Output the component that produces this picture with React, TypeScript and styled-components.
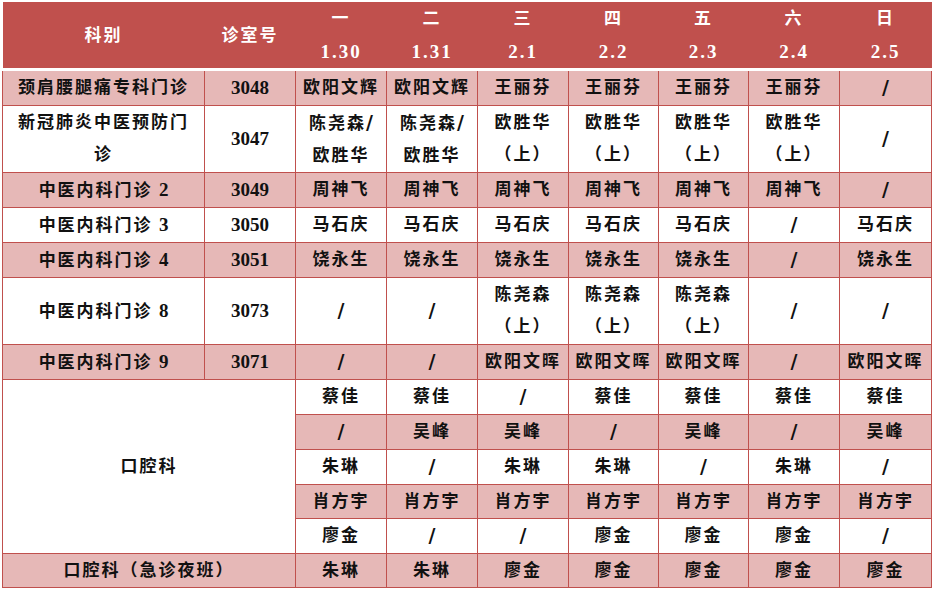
import React from "react";
import styled, { createGlobalStyle } from "styled-components";

const RED = "#c0504d";
const PINK = "#e6b8b7";

const Global = createGlobalStyle`
  html, body { margin: 0; padding: 0; background: #fff; }
  body { padding: 2px; }
`;

const Table = styled.table`
  border-collapse: collapse;
  table-layout: fixed;
  width: 929px;
  font-family: "Liberation Serif", "Noto Sans CJK SC", serif;
  font-size: 17px;
  font-weight: 700;
  letter-spacing: 2px;
  color: #111;
`;

const HeadRow = styled.tr`
  height: 33px;
`;

const HeadCell = styled.th<{ $bottom?: boolean; $num?: boolean }>`
  background: ${RED};
  color: #fff;
  font-weight: 700;
  font-size: ${(p) => (p.$num ? "19px" : "17px")};
  padding: 0;
  text-align: center;
  vertical-align: middle;
  line-height: 33px;
  border: none;
  border-bottom: ${(p) => (p.$bottom ? "3px solid #fff" : "none")};
`;

const Row = styled.tr<{ $h: number }>`
  height: ${(p) => p.$h}px;
`;

const Cell = styled.td<{ $pink?: boolean }>`
  background: ${(p) => (p.$pink ? PINK : "#fff")};
  border: 1px solid ${RED};
  padding: 0;
  text-align: center;
  vertical-align: middle;
  line-height: 32px;
  white-space: nowrap;
`;

const NameCell = styled(Cell)`
  padding: 0 8px;
  white-space: normal;
`;

const RoomCell = styled(Cell)`
  font-size: 19px;
  letter-spacing: 0;
`;

const Num = styled.span`
  font-size: 19px;
  letter-spacing: 0;
`;

const Slash = styled.span`
  font-family: "DejaVu Sans", sans-serif;
  font-weight: 700;
  font-size: 19px;
  letter-spacing: 0;
`;

const widths = [202, 91, 91, 91, 91, 90, 90, 91, 92];
const days = ["一", "二", "三", "四", "五", "六", "日"];
const dates = ["1.30", "1.31", "2.1", "2.2", "2.3", "2.4", "2.5"];

type Entry = { dept: string; room: string; h: number; cells: string[] };

const UP = "欧胜华\n（上）";
const CY = "陈尧森\n（上）";

const rows: Entry[] = [
  { dept: "颈肩腰腿痛专科门诊", room: "3048", h: 36, cells: ["欧阳文辉", "欧阳文辉", "王丽芬", "王丽芬", "王丽芬", "王丽芬", "/"] },
  { dept: "新冠肺炎中医预防门诊", room: "3047", h: 66, cells: ["陈尧森/\n欧胜华", "陈尧森/\n欧胜华", UP, UP, UP, UP, "/"] },
  { dept: "中医内科门诊 2", room: "3049", h: 35, cells: ["周神飞", "周神飞", "周神飞", "周神飞", "周神飞", "周神飞", "/"] },
  { dept: "中医内科门诊 3", room: "3050", h: 34, cells: ["马石庆", "马石庆", "马石庆", "马石庆", "马石庆", "/", "马石庆"] },
  { dept: "中医内科门诊 4", room: "3051", h: 35, cells: ["饶永生", "饶永生", "饶永生", "饶永生", "饶永生", "/", "饶永生"] },
  { dept: "中医内科门诊 8", room: "3073", h: 67, cells: ["/", "/", CY, CY, CY, "/", "/"] },
  { dept: "中医内科门诊 9", room: "3071", h: 34, cells: ["/", "/", "欧阳文晖", "欧阳文晖", "欧阳文晖", "/", "欧阳文晖"] },
];

const dental: { h: number; cells: string[] }[] = [
  { h: 35, cells: ["蔡佳", "蔡佳", "/", "蔡佳", "蔡佳", "蔡佳", "蔡佳"] },
  { h: 35, cells: ["/", "吴峰", "吴峰", "/", "吴峰", "/", "吴峰"] },
  { h: 34, cells: ["朱琳", "/", "朱琳", "朱琳", "/", "朱琳", "/"] },
  { h: 34, cells: ["肖方宇", "肖方宇", "肖方宇", "肖方宇", "肖方宇", "肖方宇", "肖方宇"] },
  { h: 34, cells: ["廖金", "/", "/", "廖金", "廖金", "廖金", "/"] },
];

const night = ["朱琳", "朱琳", "廖金", "廖金", "廖金", "廖金", "廖金"];

const Segment = ({ text }: { text: string }) => {
  const parts = text.split("/");
  return (
    <>
      {parts.map((p, i) => (
        <React.Fragment key={i}>
          {i > 0 && <Slash>/</Slash>}
          {p}
        </React.Fragment>
      ))}
    </>
  );
};

const Value = ({ text }: { text: string }) => (
  <>
    {text.split("\n").map((t, i) => (
      <React.Fragment key={i}>
        {i > 0 && <br />}
        <Segment text={t} />
      </React.Fragment>
    ))}
  </>
);

const Dept = ({ text }: { text: string }) => {
  const m = text.match(/^(.*) (\d+)$/);
  if (!m) return <>{text}</>;
  return (
    <>
      {m[1]} <Num>{m[2]}</Num>
    </>
  );
};

export default function App() {
  return (
    <>
      <Global />
      <Table>
        <colgroup>
          {widths.map((w, i) => (
            <col key={i} style={{ width: w }} />
          ))}
        </colgroup>
        <thead>
          <HeadRow>
            <HeadCell rowSpan={2} $bottom>科别</HeadCell>
            <HeadCell rowSpan={2} $bottom>诊室号</HeadCell>
            {days.map((d) => (
              <HeadCell key={d}>{d}</HeadCell>
            ))}
          </HeadRow>
          <HeadRow>
            {dates.map((d) => (
              <HeadCell key={d} $bottom $num>{d}</HeadCell>
            ))}
          </HeadRow>
        </thead>
        <tbody>
          {rows.map((r, i) => {
            const pink = i % 2 === 0;
            return (
              <Row key={r.dept} $h={r.h}>
                <NameCell $pink={pink}>
                  <Dept text={r.dept} />
                </NameCell>
                <RoomCell $pink={pink}>{r.room}</RoomCell>
                {r.cells.map((c, j) => (
                  <Cell key={j} $pink={pink}>
                    <Value text={c} />
                  </Cell>
                ))}
              </Row>
            );
          })}
          {dental.map((r, i) => {
            const pink = i % 2 === 1;
            return (
              <Row key={"d" + i} $h={r.h}>
                {i === 0 && (
                  <Cell colSpan={2} rowSpan={5}>口腔科</Cell>
                )}
                {r.cells.map((c, j) => (
                  <Cell key={j} $pink={pink}>
                    <Value text={c} />
                  </Cell>
                ))}
              </Row>
            );
          })}
          <Row $h={34}>
            <Cell colSpan={2} $pink>口腔科（急诊夜班）</Cell>
            {night.map((c, j) => (
              <Cell key={j} $pink>
                <Value text={c} />
              </Cell>
            ))}
          </Row>
        </tbody>
      </Table>
    </>
  );
}
